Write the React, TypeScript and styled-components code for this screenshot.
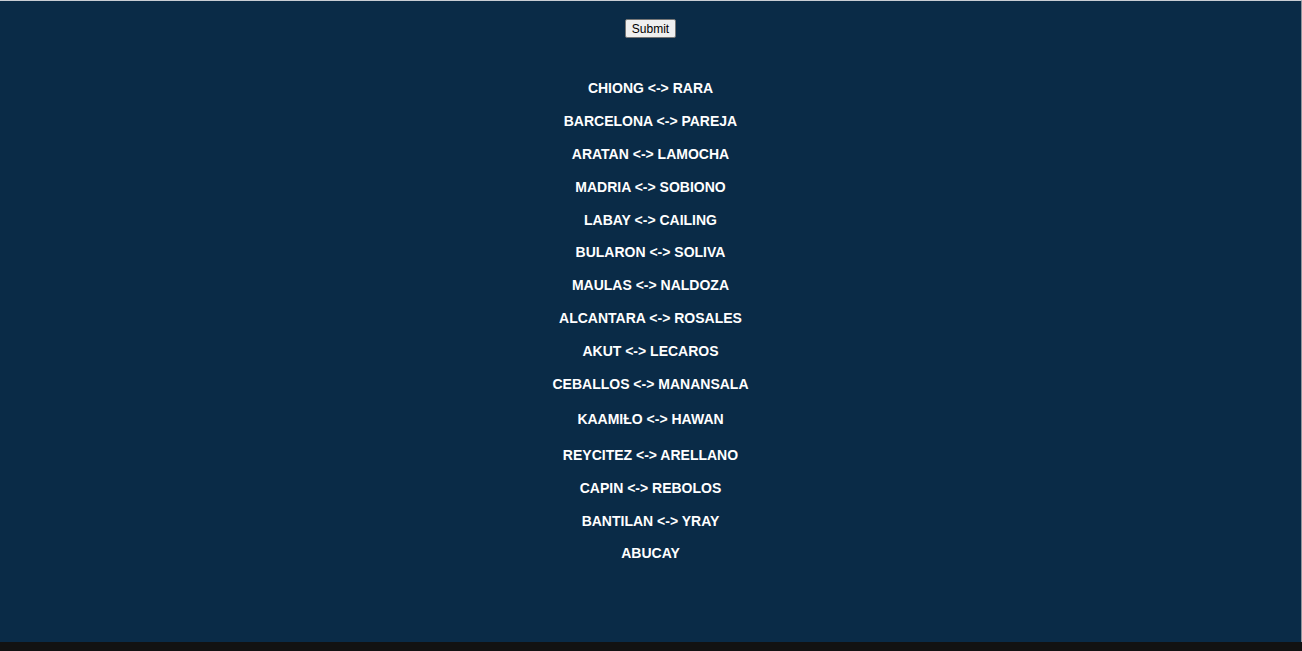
import React from "react";
import styled, { createGlobalStyle } from "styled-components";

const Global = createGlobalStyle`
  html, body { margin: 0; padding: 0; background: #121212; }
  body { font-family: "Liberation Sans", Arial, sans-serif; }
`;

const Page = styled.div`
  display: flex;
  flex-direction: column;
  height: 651px;
  overflow: hidden;
`;

const Main = styled.main`
  height: 642px;
  flex-shrink: 0;
  background: #0a2b47;
  border-top: 1px solid #c9ced4;
  border-right: 1px solid #8c949c;
  display: flex;
  flex-direction: column;
  align-items: center;
  padding-top: 18px;
  box-sizing: border-box;
`;

const Footer = styled.footer`
  flex: 1;
  background: #121212;
`;

const SubmitButton = styled.button`
  font-family: "Liberation Sans", Arial, sans-serif;
  font-size: 12px;
  line-height: 14px;
  color: #000;
  background: #efefef;
  border: 1px solid #767676;
  border-radius: 2px;
  padding: 1px 6px;
  height: 19px;
  cursor: pointer;
`;

const PairList = styled.div`
  margin-top: 42px;
  display: flex;
  flex-direction: column;
  align-items: center;
  gap: 16.9px;
`;

const Pair = styled.div<{ $tall?: boolean }>`
  font-family: "Liberation Sans", Arial, sans-serif;
  font-weight: bold;
  font-size: 14px;
  line-height: 16px;
  color: #ffffff;
  text-align: center;
  padding-top: ${(p) => (p.$tall ? "2px" : "0")};
  padding-bottom: ${(p) => (p.$tall ? "3px" : "0")};
`;

const pairs: { text: string; tall?: boolean }[] = [
  { text: "CHIONG <-> RARA" },
  { text: "BARCELONA <-> PAREJA" },
  { text: "ARATAN <-> LAMOCHA" },
  { text: "MADRIA <-> SOBIONO" },
  { text: "LABAY <-> CAILING" },
  { text: "BULARON <-> SOLIVA" },
  { text: "MAULAS <-> NALDOZA" },
  { text: "ALCANTARA <-> ROSALES" },
  { text: "AKUT <-> LECAROS" },
  { text: "CEBALLOS <-> MANANSALA" },
  { text: "KAAMIȽO <-> HAWAN", tall: true },
  { text: "REYCITEZ <-> ARELLANO" },
  { text: "CAPIN <-> REBOLOS" },
  { text: "BANTILAN <-> YRAY" },
  { text: "ABUCAY" },
];

export default function App() {
  return (
    <>
      <Global />
      <Page>
        <Main>
          <SubmitButton type="button">Submit</SubmitButton>
          <PairList>
            {pairs.map((p, i) => (
              <Pair key={i} $tall={p.tall}>
                {p.text}
              </Pair>
            ))}
          </PairList>
        </Main>
        <Footer />
      </Page>
    </>
  );
}
